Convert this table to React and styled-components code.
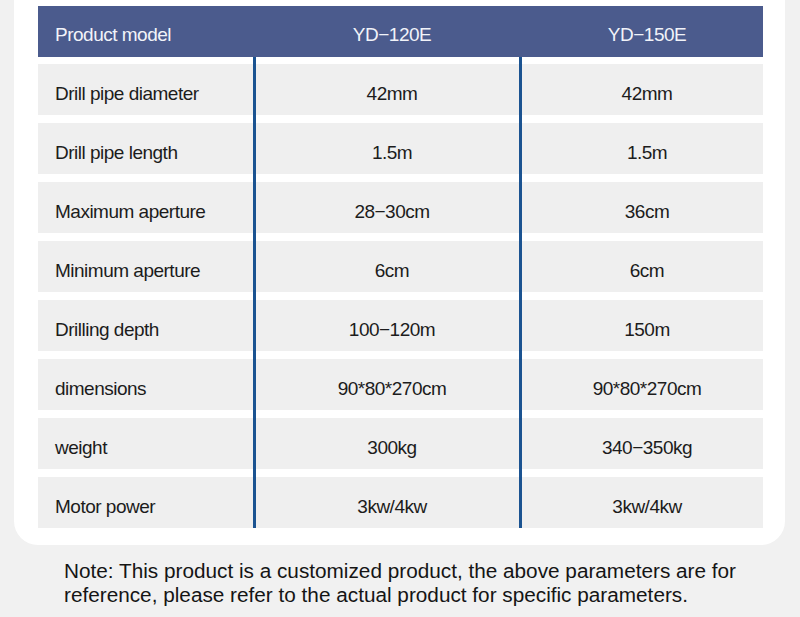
import React from "react";
import styled, { createGlobalStyle } from "styled-components";

const GlobalStyle = createGlobalStyle`
  html, body {
    margin: 0;
    padding: 0;
    background: #f1f1f1;
  }
  body {
    font-family: "Liberation Sans", Arial, Helvetica, sans-serif;
  }
`;

const specs = [
  { label: "Drill pipe diameter", a: "42mm", b: "42mm" },
  { label: "Drill pipe length", a: "1.5m", b: "1.5m" },
  { label: "Maximum aperture", a: "28\u221230cm", b: "36cm" },
  { label: "Minimum aperture", a: "6cm", b: "6cm" },
  { label: "Drilling depth", a: "100\u2212120m", b: "150m" },
  { label: "dimensions", a: "90*80*270cm", b: "90*80*270cm" },
  { label: "weight", a: "300kg", b: "340\u2212350kg" },
  { label: "Motor power", a: "3kw/4kw", b: "3kw/4kw" },
];

const COLS = "215px 3px 263px 3px 1fr";

const Page = styled.div`
  width: 800px;
  height: 617px;
  overflow: hidden;
`;

const Card = styled.div`
  margin: 0 15px 0 14px;
  background: #ffffff;
  border-radius: 0 0 24px 24px;
  padding: 6px 22px 17px 24px;
`;

const HeaderRow = styled.div`
  display: grid;
  grid-template-columns: ${COLS};
  height: 51px;
  background: #4b5b8d;
`;

const HeadCell = styled.div`
  grid-column: ${(p) => p.$col};
  display: flex;
  align-items: center;
  justify-content: ${(p) => (p.$left ? "flex-start" : "center")};
  padding: 7px 0 0 ${(p) => (p.$left ? "17px" : "9px")};
  color: #f1f3f9;
  font-size: 19px;
  letter-spacing: -0.5px;
`;

const Body = styled.div`
  display: grid;
  grid-template-columns: ${COLS};
  grid-template-rows: repeat(${(p) => p.$rows}, 51px);
  row-gap: 8px;
  margin-top: 7px;
`;

const Cell = styled.div`
  grid-column: ${(p) => p.$col};
  grid-row: ${(p) => p.$row};
  display: flex;
  align-items: center;
  justify-content: ${(p) => (p.$left ? "flex-start" : "center")};
  padding: 9px 0 0 ${(p) => (p.$left ? "17px" : "9px")};
  background: #efefef;
  color: #1c1c1c;
  font-size: 19px;
  letter-spacing: -0.5px;
`;

const Divider = styled.div`
  grid-column: ${(p) => p.$col};
  grid-row: 1 / -1;
  margin-top: -7px;
  background: #1b5391;
`;

const Note = styled.p`
  margin: 14px 0 0 64px;
  width: 720px;
  font-size: 20.75px;
  line-height: 24px;
  color: #151515;
`;

export default function App() {
  return (
    <Page>
      <GlobalStyle />
      <Card>
        <HeaderRow>
          <HeadCell $col={1} $left>
            Product model
          </HeadCell>
          <HeadCell $col={3}>YD{"\u2212"}120E</HeadCell>
          <HeadCell $col={5}>YD{"\u2212"}150E</HeadCell>
        </HeaderRow>
        <Body $rows={specs.length}>
          {specs.map((s, i) => (
            <React.Fragment key={s.label}>
              <Cell $col={1} $row={i + 1} $left>
                {s.label}
              </Cell>
              <Cell $col={3} $row={i + 1}>
                {s.a}
              </Cell>
              <Cell $col={5} $row={i + 1}>
                {s.b}
              </Cell>
            </React.Fragment>
          ))}
          <Divider $col={2} />
          <Divider $col={4} />
        </Body>
      </Card>
      <Note>
        Note: This product is a customized product, the above parameters are for
        reference, please refer to the actual product for specific parameters.
      </Note>
    </Page>
  );
}
